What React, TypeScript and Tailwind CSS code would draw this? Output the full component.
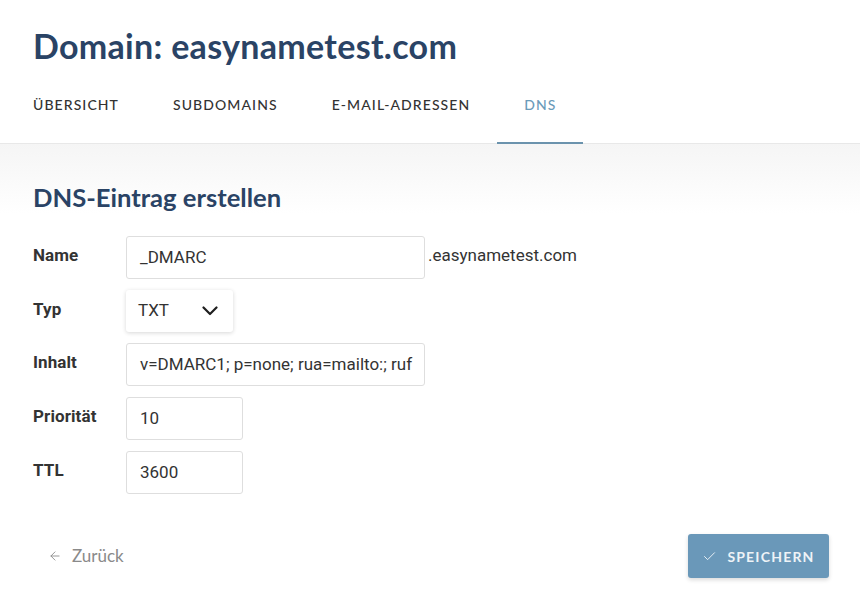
import { ArrowLeft, Check } from "lucide-react";

const tabs = [
  { label: "Übersicht" },
  { label: "Subdomains" },
  { label: "E-Mail-Adressen" },
  { label: "DNS", active: true },
];

const Row = ({ label, children }: { label: string; children: React.ReactNode }) => (
  <div className="flex items-start">
    <div className="w-[93px] pt-[8px] font-['Roboto',sans-serif] text-[17px] font-bold leading-[22px] tracking-[0.1px] text-[#333]">
      {label}
    </div>
    {children}
  </div>
);

const inputCls =
  "h-[43px] rounded-[3px] border border-[#dedede] bg-white px-[13px] font-['Roboto',sans-serif] text-[17px] leading-[41px] text-[#333] overflow-hidden whitespace-nowrap";

export default function App() {
  return (
    <div className="min-h-[602px] bg-white font-['Lato',sans-serif]">
      <header className="border-b border-[#e8e8e8] bg-white px-[33px] pt-[26px]">
        <h1 className="text-[34px] font-bold leading-[40px] tracking-[0.3px] text-[#2a4365]">
          Domain: easynametest.com
        </h1>
        <nav className="-ml-[27px] mt-[14px] flex">
          {tabs.map((t) => (
            <div
              key={t.label}
              className={`-mb-px border-b-2 px-[27px] pb-[27px] pt-[15px] text-[14px] font-medium uppercase leading-[20px] tracking-[1.08px] ${
                t.active ? "border-[#6b93ad] text-[#6b9bb9]" : "border-transparent text-[#333]"
              }`}
            >
              {t.label}
            </div>
          ))}
        </nav>
      </header>

      <main className="bg-[linear-gradient(to_bottom,#f5f5f5,#ffffff_70px)] px-[33px] pt-[37px]">
        <h2 className="text-[25.6px] font-bold leading-[32px] text-[#2a4365]">DNS-Eintrag erstellen</h2>

        <div className="mt-[23px] flex flex-col gap-[11px]">
          <Row label="Name">
            <div className={`${inputCls} w-[299px]`}>_DMARC</div>
            <div className="pl-[3px] pt-[8px] font-['Roboto',sans-serif] text-[17px] leading-[22px] text-[#333]">
              .easynametest.com
            </div>
          </Row>
          <Row label="Typ">
            <div className="flex h-[42px] w-[107px] items-center justify-between rounded-[3px] bg-white pl-[12px] pr-[15px] font-['Roboto',sans-serif] text-[17px] text-[#333] shadow-[0_1px_4px_rgba(0,0,0,0.16)]">
              TXT
              <svg width="16" height="10" viewBox="0 0 16 10" fill="none">
                <polyline points="1.5,1.5 8,8 14.5,1.5" stroke="#1f1f1f" strokeWidth="2.2" strokeLinecap="round" strokeLinejoin="round" />
              </svg>
            </div>
          </Row>
          <Row label="Inhalt">
            <div className={`${inputCls} w-[299px]`}>v=DMARC1; p=none; rua=mailto:; ruf</div>
          </Row>
          <Row label="Priorität">
            <div className={`${inputCls} w-[117px]`}>10</div>
          </Row>
          <Row label="TTL">
            <div className={`${inputCls} w-[117px]`}>3600</div>
          </Row>
        </div>

        <div className="mt-[40px] flex items-center justify-between pb-[23px]">
          <div className="flex items-center gap-[10px] pl-[15px] text-[17px] text-[#8a8a8a]">
            <ArrowLeft size={14} strokeWidth={1.5} />
            Zurück
          </div>
          <button className="mr-[-2px] flex h-[44px] w-[141px] items-center justify-center gap-[10px] rounded-[3px] bg-[#6a98b9] text-[14px] font-bold uppercase tracking-[1.2px] text-[#eef3f7] shadow-[0_2px_4px_rgba(0,0,0,0.15)]">
            <Check size={15} strokeWidth={1.5} />
            Speichern
          </button>
        </div>
      </main>
    </div>
  );
}
